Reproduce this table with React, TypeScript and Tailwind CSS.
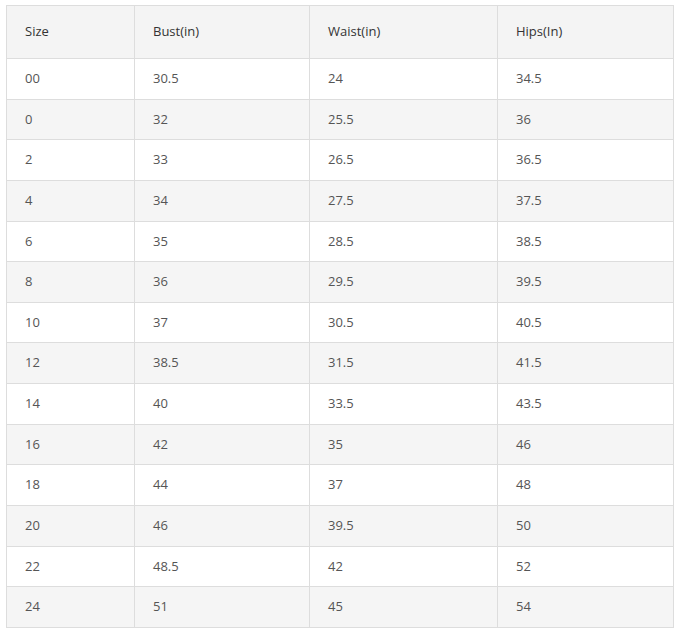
import React from "react";

const rows: [string, string, string, string][] = [
  ["00", "30.5", "24", "34.5"],
  ["0", "32", "25.5", "36"],
  ["2", "33", "26.5", "36.5"],
  ["4", "34", "27.5", "37.5"],
  ["6", "35", "28.5", "38.5"],
  ["8", "36", "29.5", "39.5"],
  ["10", "37", "30.5", "40.5"],
  ["12", "38.5", "31.5", "41.5"],
  ["14", "40", "33.5", "43.5"],
  ["16", "42", "35", "46"],
  ["18", "44", "37", "48"],
  ["20", "46", "39.5", "50"],
  ["22", "48.5", "42", "52"],
  ["24", "51", "45", "54"],
];

export default function App() {
  return (
    <div className="bg-white w-[679px] h-[633px] pt-[5px] pl-[6px]" style={{ fontFamily: '"Open Sans", sans-serif' }}>
      <table className="border-collapse table-fixed w-[667px] text-[13px]">
        <colgroup>
          <col className="w-[128px]" />
          <col className="w-[175px]" />
          <col className="w-[188px]" />
          <col className="w-[176px]" />
        </colgroup>
        <thead>
          <tr className="h-[53px] bg-[#f4f4f4]">
            {["Size", "Bust(in)", "Waist(in)", "Hips(In)"].map((h) => (
              <th key={h} className="border border-[#dddddd] pl-[18px] text-left font-normal text-[#333333]">
                {h}
              </th>
            ))}
          </tr>
        </thead>
        <tbody>
          {rows.map((r, i) => (
            <tr key={i} className={`h-[40.64px] ${i % 2 === 1 ? "bg-[#f5f5f5]" : "bg-white"}`}>
              {r.map((c, j) => (
                <td key={j} className="border border-[#dddddd] pl-[18px] text-[#555555]">
                  {c}
                </td>
              ))}
            </tr>
          ))}
        </tbody>
      </table>
    </div>
  );
}
